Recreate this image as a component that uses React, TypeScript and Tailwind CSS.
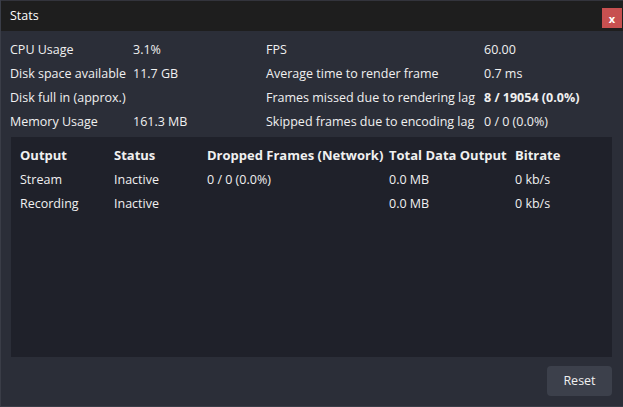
import React from "react";

const font = { fontFamily: '"Open Sans", "Noto Sans", sans-serif' };

export default function App() {
  const left: [string, string][] = [
    ["CPU Usage", "3.1%"],
    ["Disk space available", "11.7 GB"],
    ["Disk full in (approx.)", ""],
    ["Memory Usage", "161.3 MB"],
  ];
  const right: [string, string, boolean][] = [
    ["FPS", "60.00", false],
    ["Average time to render frame", "0.7 ms", false],
    ["Frames missed due to rendering lag", "8 / 19054 (0.0%)", true],
    ["Skipped frames due to encoding lag", "0 / 0 (0.0%)", false],
  ];
  const cols = ["w-[94px]", "w-[93px]", "w-[182px]", "w-[126px]", "flex-1"];
  const rows = [
    ["Stream", "Inactive", "0 / 0 (0.0%)", "0.0 MB", "0 kb/s"],
    ["Recording", "Inactive", "", "0.0 MB", "0 kb/s"],
  ];
  return (
    <div
      className="w-[623px] h-[407px] flex flex-col bg-[#2b2e38] text-[12.5px] text-[#f0f0f0] border-l border-b border-[#3a3d47] overflow-hidden"
      style={font}
    >
      <div className="h-[31px] shrink-0 flex items-center justify-between bg-[#1e1e1e] border-t border-[#33343c] pl-[9px] pr-[1px]">
        <span className="text-white text-[12.5px]">Stats</span>
        <div className="mt-[4px] w-[20px] h-[20px] bg-[#c75050] flex items-center justify-center text-white text-[11px] font-bold leading-none">
          x
        </div>
      </div>
      <div className="flex pt-[7px] pl-[9px]">
        <div className="w-[256px] flex flex-col">
          {left.map(([l, v]) => (
            <div key={l} className="h-[24px] flex items-center">
              <span className="w-[123px] whitespace-nowrap">{l}</span>
              <span>{v}</span>
            </div>
          ))}
        </div>
        <div className="flex flex-col">
          {right.map(([l, v, b]) => (
            <div key={l} className="h-[24px] flex items-center">
              <span className="w-[218px] whitespace-nowrap">{l}</span>
              <span className={b ? "font-bold" : ""}>{v}</span>
            </div>
          ))}
        </div>
      </div>
      <div className="ml-[10px] mr-[11px] mt-[3px] h-[220px] bg-[#1f212a] px-[9px] pt-[7px]">
        <div className="h-[24px] flex items-center font-bold text-[13px]">
          {["Output", "Status", "Dropped Frames (Network)", "Total Data Output", "Bitrate"].map((h, i) => (
            <span key={h} className={`${cols[i]} whitespace-nowrap`}>{h}</span>
          ))}
        </div>
        {rows.map((r) => (
          <div key={r[0]} className="h-[24px] flex items-center">
            {r.map((c, i) => (
              <span key={i} className={`${cols[i]} whitespace-nowrap`}>{c}</span>
            ))}
          </div>
        ))}
      </div>
      <div className="flex justify-end pr-[11px] pt-[9px]">
        <button className="w-[65px] h-[30px] rounded-[4px] bg-[#3c404b] text-[12.5px] text-[#f0f0f0] pt-[1px]">
          Reset
        </button>
      </div>
    </div>
  );
}
